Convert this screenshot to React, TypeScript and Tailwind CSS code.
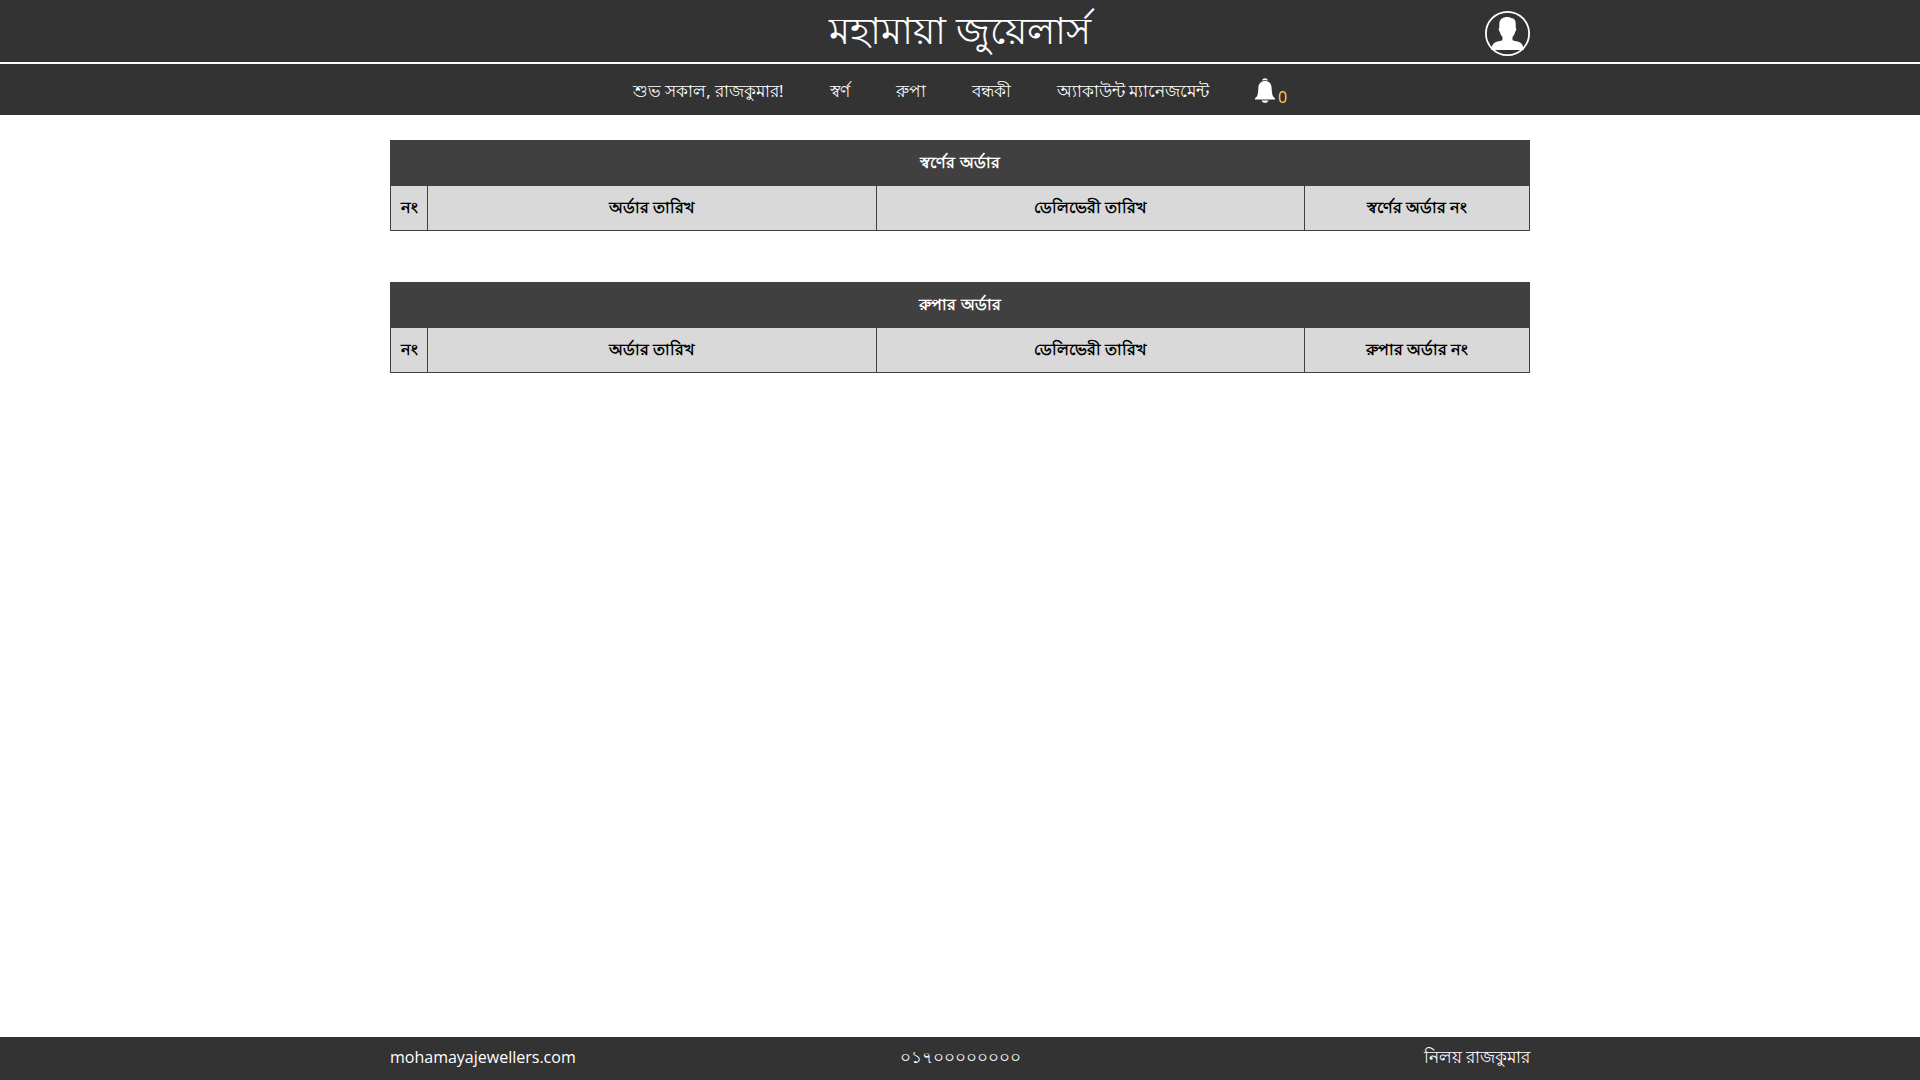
import React from 'react';

interface OrderTableProps {
  title: string;
  orderLabel: string;
}

const NAV_LINKS = ['স্বর্ণ', 'রুপা', 'বন্ধকী', 'অ্যাকাউন্ট ম্যানেজমেন্ট'];

const UserIcon = () => (
  <svg viewBox="0 0 45 45" className="w-[45px] h-[45px]" aria-hidden="true">
    <circle cx="22.5" cy="22.5" r="21.6" fill="none" stroke="#fff" strokeWidth="1.8" />
    <path
      fill="#fff"
      d="M22.5 6c1.400 0 2.600.3 3.600 1 3.200.1 4.700 2.400 4.600 6v3.500c.8.600.800 3.200-.500 4.300-.6 2.600-1.600 4-2.700 5.300v2.400c0 1 1.200 1.400 4 1.700 4 .4 6.200 2.600 6.700 6.100l.5 2.700H6.300l.5-2.700c.5-3.500 2.700-5.700 6.700-6.100 2.800-.3 4-.7 4-1.700v-2.400c-1.100-1.300-2.100-2.700-2.700-5.300-1.300-1.100-1.300-3.700-.5-4.300V13c0-4.500 3.200-7 8.200-7z"
    />
  </svg>
);

const BellIcon = () => (
  <svg viewBox="0 0 20 25" className="w-5 h-[25px]" aria-hidden="true">
    <path fill="#fff" d="M7 2.600C7.600 1 8.600.200 10 .200s2.400.8 3 2.400c-2-.5-4-.5-6 0z" />
    <path
      fill="#fff"
      d="M10 3c3.900 0 6.400 2.600 6.600 6.500.2 5 .6 7.500 1.700 9.300L20 20.200v1.300H0v-1.300l1.700-1.400c1.100-1.800 1.500-4.300 1.700-9.300C3.600 5.600 6.100 3 10 3z"
    />
    <path fill="#fff" d="M6.500 22.400h7c-.6 1.500-1.900 2.300-3.500 2.300s-2.900-.8-3.500-2.300z" />
  </svg>
);

const OrderTable: React.FC<OrderTableProps> = ({ title, orderLabel }) => (
  <table className="w-full table-fixed border-collapse text-base leading-7 text-center">
    <colgroup>
      <col className="w-[37px]" />
      <col className="w-[449px]" />
      <col className="w-[428px]" />
      <col className="w-[225px]" />
    </colgroup>
    <thead>
      <tr className="bg-[#404040] text-white">
        <th colSpan={4} className="border border-[#404040] px-2 pt-[7px] pb-[9px] font-bold">{title}</th>
      </tr>
      <tr className="bg-[#d9d9d9] text-black">
        <th className="border border-[#404040] px-2 pt-[7px] pb-[9px] font-semibold">নং</th>
        <th className="border border-[#404040] px-2 pt-[7px] pb-[9px] font-semibold">অর্ডার তারিখ</th>
        <th className="border border-[#404040] px-2 pt-[7px] pb-[9px] font-semibold">ডেলিভেরী তারিখ</th>
        <th className="border border-[#404040] px-2 pt-[7px] pb-[9px] font-semibold">{orderLabel}</th>
      </tr>
    </thead>
  </table>
);

export default function App() {
  return (
    <div className="min-h-screen flex flex-col bg-white font-['Open_Sans','Noto_Sans',sans-serif]">
      <header className="bg-[#333333] text-white">
        {/* Brand bar */}
        <div className="border-b-2 border-white">
          <div className="mx-auto max-w-[1140px] grid grid-cols-[1fr_auto_1fr] items-center">
            <h1 className="col-start-2 pb-1 text-[38px] leading-[58px]">
              <a href="#">মহামায়া জুয়েলার্স</a>
            </h1>
            <button type="button" aria-label="Profile" className="justify-self-end pt-1 cursor-pointer">
              <UserIcon />
            </button>
          </div>
        </div>

        {/* Navigation */}
        <nav className="flex justify-center items-center gap-[46px] pt-[13px] pb-[11px] text-[17px] leading-[27px]">
          <span>শুভ সকাল, রাজকুমার!</span>
          {NAV_LINKS.map((label) => (
            <a key={label} href="#">{label}</a>
          ))}
          <a href="#" aria-label="Notifications" className="flex items-end gap-[3px]">
            <BellIcon />
            <span className="text-base leading-3 text-[#ffd24d]">0</span>
          </a>
        </nav>
      </header>

      <main className="mx-auto w-full max-w-[1140px] grow flex flex-col gap-[51px] pt-[25px]">
        <OrderTable title="স্বর্ণের অর্ডার" orderLabel="স্বর্ণের অর্ডার নং" />
        <OrderTable title="রুপার অর্ডার" orderLabel="রুপার অর্ডার নং" />
      </main>

      <footer className="bg-[#333333] text-white">
        <div className="mx-auto max-w-[1140px] grid grid-cols-3 items-center pt-1.5 pb-2.5 text-[17px] leading-[27px]">
          <a href="#" className="text-base">mohamayajewellers.com</a>
          <span className="text-center">০১৭০০০০০০০০</span>
          <span className="text-right">নিলয় রাজকুমার</span>
        </div>
      </footer>
    </div>
  );
}
